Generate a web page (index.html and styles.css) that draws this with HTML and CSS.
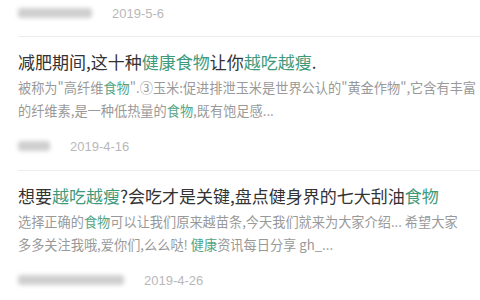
FILE: index.html
```html
<!DOCTYPE html>
<html lang="zh-CN">
<head>
    <meta charset="UTF-8">
    <meta name="viewport" content="width=device-width, initial-scale=1.0">
    <title>搜索结果</title>
    <link rel="stylesheet" href="styles.css">
</head>
<body>
    <div class="results">
        <div class="meta meta-top">
            <span class="source" style="width: 74px"></span>
            <span class="date">2019-5-6</span>
        </div>

        <div class="item">
            <h2 class="title">减肥期间,这十种<em>健康食物</em>让你<em>越吃越瘦</em>.</h2>
            <p class="summary">被称为"高纤维<em>食物</em>".③玉米:促进排泄玉米是世界公认的"黄金作物",它含有丰富<br>的纤维素,是一种低热量的<em>食物</em>,既有饱足感...</p>
            <div class="meta">
                <span class="source" style="width: 32px"></span>
                <span class="date">2019-4-16</span>
            </div>
        </div>

        <div class="item">
            <h2 class="title">想要<em>越吃越瘦</em>?会吃才是关键,盘点健身界的七大刮油<em>食物</em></h2>
            <p class="summary">选择正确的<em>食物</em>可以让我们原来越苗条,今天我们就来为大家介绍... 希望大家<br>多多关注我哦,爱你们,么么哒! <em>健康</em>资讯每日分享 gh_...</p>
            <div class="meta">
                <span class="source" style="width: 106px"></span>
                <span class="date">2019-4-26</span>
            </div>
        </div>
    </div>
</body>
</html>
```

FILE: styles.css
```css
* {
    margin: 0;
    padding: 0;
    box-sizing: border-box;
}

body {
    background: #fff;
    font-family: "Noto Sans CJK SC", "Noto Sans", sans-serif;
    color: #333;
    overflow: hidden;
}

.results {
    margin-left: 18px;
}

em {
    font-style: normal;
    color: #3f9a7c;
}

.meta {
    display: flex;
    align-items: center;
    gap: 20px;
    height: 20px;
    margin-top: 14px;
}

.meta-top {
    margin-top: 3px;
    margin-bottom: 13px;
}

.source {
    display: block;
    height: 10px;
    background: #cfcfcf;
    border-radius: 3px;
    filter: blur(2px);
}

.date {
    font-family: "Liberation Sans", Arial, sans-serif;
    font-size: 13px;
    color: #b8b8b8;
}

.item {
    border-top: 1px solid #ececec;
    padding: 13px 0 14px;
}

.title {
    font-size: 17px;
    font-weight: normal;
    line-height: 24px;
    color: #333;
}

.summary {
    margin-top: 2px;
    font-size: 13.2px;
    line-height: 23px;
    color: #999;
    white-space: nowrap;
}

.summary em {
    color: #52a585;
}
```
